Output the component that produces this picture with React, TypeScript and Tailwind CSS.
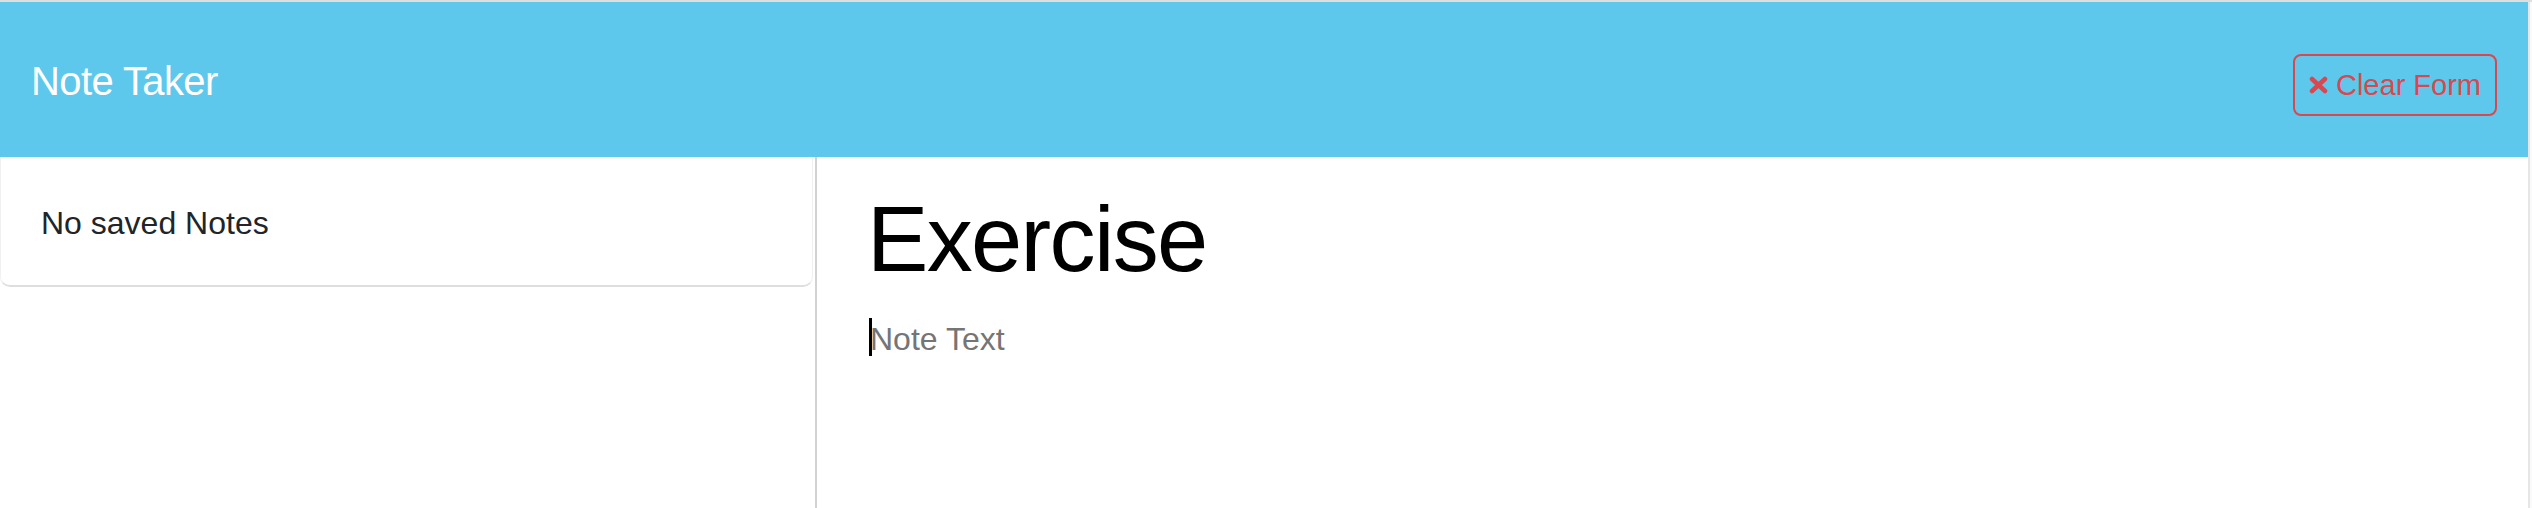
export default function App() {
  return (
    <div className="h-[508px] w-full overflow-hidden border-t-2 border-[#dedede] bg-white flex font-['Liberation_Sans',Arial,sans-serif]">
      <div className="flex-1 flex flex-col">
        {/* Navbar */}
        <header className="h-[155px] bg-[#5ec8ec] flex items-start justify-between pl-[31px] pr-[31px]">
          <h1 className="mt-[59px] text-[40px] leading-none tracking-[-0.6px] text-white">Note Taker</h1>
          <button className="mt-[52px] h-[62px] w-[204px] flex items-center justify-center gap-[8px] rounded-[8px] border-2 border-[#d9474f] text-[#d9474f] text-[29px] leading-none">
            <svg width="19" height="18" viewBox="0 0 19 18" className="shrink-0">
              <path d="M3 3 L16 15 M16 3 L3 15" stroke="#d9474f" strokeWidth="4.5" strokeLinecap="round" />
            </svg>
            <span>Clear Form</span>
          </button>
        </header>

        <div className="flex-1 flex">
          {/* Saved notes list */}
          <aside className="w-[815px] pr-[2px]">
            <div className="h-[130px] border-x border-b-2 border-x-[#f0f0f0] border-b-[#dedede] rounded-b-[10px] pl-[40px] pt-[50px]">
              <p className="text-[32px] leading-none text-[#212529]">No saved Notes</p>
            </div>
          </aside>

          <div className="w-[2px] bg-[#d2d2d2]" />

          {/* Note editor */}
          <main className="flex-1 pl-[50px] pt-[36px]">
            <h2 className="text-[92px] leading-none tracking-[-0.018em] text-black">Exercise</h2>
            <div className="relative mt-[38px] ml-[2px]">
              <span className="absolute left-0 top-[-5px] h-[38px] w-[3px] bg-black" />
              <p className="pl-[1px] text-[32px] leading-none text-[#757575]">Note Text</p>
            </div>
          </main>
        </div>
      </div>
      <div className="w-[4px] border-l-2 border-[#e6e6e6] bg-[#fafafa]" />
    </div>
  )
}
